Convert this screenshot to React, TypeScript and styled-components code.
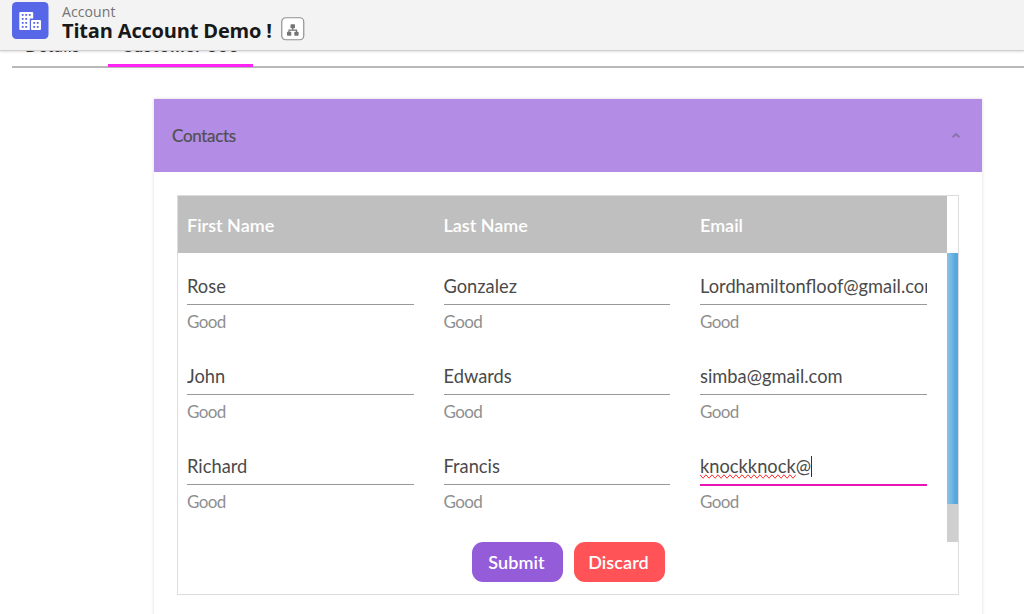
import React from "react";
import styled, { createGlobalStyle } from "styled-components";

const GlobalStyle = createGlobalStyle`
  * { box-sizing: border-box; }
  body { margin: 0; background: #fff; overflow: hidden; font-family: Lato, sans-serif; }
`;

const Page = styled.div`
  display: flex;
  flex-direction: column;
  height: 614px;
  overflow: hidden;
`;

const Header = styled.header`
  display: flex;
  flex: none;
  height: 51px;
  padding: 2px 0 0 12px;
  background: #f3f3f3;
  border-bottom: 1px solid #d0d0d0;
  box-shadow: 0 1px 2px rgba(0, 0, 0, 0.12);
  font-family: "Open Sans", sans-serif;
`;

const Logo = styled.svg`
  flex: none;
  width: 37px;
  height: 37px;
`;

const Titles = styled.div`
  display: flex;
  flex-direction: column;
  margin-left: 13px;
`;

const ObjectLabel = styled.span`
  height: 18px;
  font-size: 14px;
  line-height: 19px;
  letter-spacing: 0.1px;
  color: #747474;
`;

const TitleRow = styled.div`
  display: flex;
  align-items: center;
  height: 22px;
`;

const Title = styled.h1`
  width: 218.5px;
  margin: 0;
  font-size: 20px;
  line-height: 22px;
  font-weight: 700;
  white-space: nowrap;
  letter-spacing: -0.17px;
  color: #181818;
`;

const Hierarchy = styled.svg`
  flex: none;
  width: 24px;
  height: 24px;
  margin-top: -4px;
`;

const Tabs = styled.nav`
  display: flex;
  flex: none;
  height: 17px;
  margin-left: 12px;
  overflow: hidden;
  background: linear-gradient(#b8b8b8, #b8b8b8) 0 15px / 100% 2px no-repeat;
`;

const Tab = styled.div<{ $width: number; $gap?: number; $active?: boolean }>`
  flex: none;
  width: ${(p) => p.$width}px;
  height: 16px;
  margin-right: ${(p) => p.$gap ?? 0}px;
  text-align: center;
  font-size: 17px;
  font-weight: ${(p) => (p.$active ? 700 : 400)};
  line-height: 22px;
  letter-spacing: ${(p) => (p.$active ? 0.9 : 0.5)}px;
  color: #333;
  border-bottom: ${(p) => (p.$active ? "3px solid #ff24f2" : "none")};
`;

const TabText = styled.span`
  display: block;
  margin-top: -16px;
`;

const Card = styled.section`
  display: flex;
  flex: none;
  flex-direction: column;
  width: 828px;
  height: 560px;
  margin: 31px 0 0 154px;
  box-shadow: 0 0 3px rgba(0, 0, 0, 0.17);
`;

const CardHeader = styled.div`
  display: flex;
  align-items: center;
  justify-content: space-between;
  height: 73px;
  padding: 0 21px 0 18px;
  background: #b38ce6;
  color: #505050;
  font-size: 17px;
  letter-spacing: -0.3px;
`;

const CardTitle = styled.span`
  margin-top: -1px;
  -webkit-text-stroke: 0.2px #505050;
`;

const Grid = styled.div`
  width: 782px;
  height: 400px;
  margin: 23px 0 0 23px;
  border: 1px solid #dcdcdc;
`;

const Columns = styled.div`
  display: grid;
  grid-template-columns: repeat(3, 256.5px);
  width: 769px;
`;

const HeadRow = styled(Columns)`
  height: 57px;
  align-items: center;
  background: #bfbfbf;
`;

const HeadCell = styled.div`
  padding: 0 0 0 9px;
  font-size: 18px;
  font-weight: 600;
  color: #fff;
`;

const Body = styled.div`
  display: flex;
  height: 289px;
`;

const Rows = styled.div`
  width: 769px;
`;

const Row = styled(Columns)`
  height: 90.2px;
`;

const Field = styled.div`
  display: flex;
  flex-direction: column;
  padding: 15px 21px 0 9px;
  min-width: 0;
`;

const Value = styled.div<{ $focus?: boolean }>`
  height: ${(p) => (p.$focus ? 38 : 37)}px;
  margin-bottom: ${(p) => (p.$focus ? -1 : 0)}px;
  overflow: hidden;
  white-space: nowrap;
  font-size: 18.3px;
  line-height: 36px;
  color: #4a4a4a;
  border-bottom: ${(p) => (p.$focus ? "2px solid #e815b5" : "1px solid #999")};
`;

const Misspelled = styled.span`
  text-decoration-line: spelling-error;
`;

const Caret = styled.span`
  display: inline-block;
  width: 1px;
  height: 21px;
  vertical-align: -4px;
  background: #333;
`;

const Hint = styled.div`
  height: 20px;
  margin-top: 7px;
  font-size: 17px;
  line-height: 20px;
  letter-spacing: -0.6px;
  color: #8f8f8f;
`;

const ScrollTrack = styled.div`
  width: 11px;
  height: 289px;
  background: #cfcfcf;
`;

const ScrollThumb = styled.div`
  height: 251px;
  background: linear-gradient(90deg, #8cc3e6 0%, #70b5e2 45%, #55a8e0 75%, #55a8e0 100%);
`;

const Actions = styled.div`
  display: flex;
  justify-content: center;
  gap: 11px;
`;

const Button = styled.button<{ $color: string }>`
  width: 91px;
  height: 40px;
  padding: 0 1px 0 0;
  border: 0;
  border-radius: 11px;
  background: ${(p) => p.$color};
  color: #fff;
  font-family: Lato, sans-serif;
  font-size: 18px;
  font-weight: 600;
  letter-spacing: 0.1px;
`;

const contacts = [
  ["Rose", "Gonzalez", "Lordhamiltonfloof@gmail.com"],
  ["John", "Edwards", "simba@gmail.com"],
  ["Richard", "Francis", "knockknock@"],
];

const buildingWindows = [
  [10, 13], [13.5, 13], [17, 13], [10, 17], [13.5, 17], [10, 21], [13.5, 21], [10, 25], [13.5, 25],
  [21.5, 21], [25, 21], [21.5, 25], [25, 25],
];

export default function App() {
  return (
    <Page>
      <GlobalStyle />
      <Header>
        <Logo viewBox="0 0 37 37">
          <rect width="36.5" height="37" rx="4.5" fill="#5867e8" />
          <path d="M8.3 10h11.9a1 1 0 0 1 1 1v5.5h-3.4V28H8.3a1 1 0 0 1-1-1V11a1 1 0 0 1 1-1z" fill="#fff" />
          <rect x="19" y="18" width="10" height="10" rx="1" fill="#fff" />
          {buildingWindows.map(([x, y]) => (
            <rect key={`${x}-${y}`} x={x - 0.2} y={y - 1} width="1.8" height="1.8" fill="#5867e8" />
          ))}
        </Logo>
        <Titles>
          <ObjectLabel>Account</ObjectLabel>
          <TitleRow>
            <Title>Titan Account Demo !</Title>
            <Hierarchy viewBox="0 0 24 24">
              <rect x="0.75" y="0.75" width="22" height="22" rx="4" fill="#fff" stroke="#919191" strokeWidth="1.2" />
              <g fill="#747474">
                <rect x="9.5" y="7.3" width="4.5" height="4" rx="0.7" />
                <rect x="6" y="14.7" width="4.3" height="4" rx="0.7" />
                <rect x="13.3" y="14.7" width="4.3" height="4" rx="0.7" />
              </g>
              <path d="M11.75 11v2.2M8 15v-1.8h7.5v1.8" fill="none" stroke="#747474" strokeWidth="1.2" />
            </Hierarchy>
          </TitleRow>
        </Titles>
      </Header>
      <Tabs>
        <Tab $width={81} $gap={15}><TabText>Details</TabText></Tab>
        <Tab $width={145} $active><TabText>Customer 360</TabText></Tab>
      </Tabs>
      <Card>
        <CardHeader>
          <CardTitle>Contacts</CardTitle>
          <svg width="10" height="7" viewBox="0 0 10 7">
            <path d="M1.5 5.3 5 2l3.5 3.3" fill="none" stroke="#8b74ae" strokeWidth="2" />
          </svg>
        </CardHeader>
        <Grid>
          <HeadRow>
            <HeadCell>First Name</HeadCell>
            <HeadCell>Last Name</HeadCell>
            <HeadCell>Email</HeadCell>
          </HeadRow>
          <Body>
            <Rows>
              {contacts.map((contact) => (
                <Row key={contact[0]}>
                  {contact.map((value) => (
                    <Field key={value}>
                      {value === "knockknock@" ? (
                        <Value $focus>
                          <Misspelled>knockknock</Misspelled>@<Caret />
                        </Value>
                      ) : (
                        <Value>{value}</Value>
                      )}
                      <Hint>Good</Hint>
                    </Field>
                  ))}
                </Row>
              ))}
            </Rows>
            <ScrollTrack>
              <ScrollThumb />
            </ScrollTrack>
          </Body>
          <Actions>
            <Button $color="#945cd9">Submit</Button>
            <Button $color="#ff5357">Discard</Button>
          </Actions>
        </Grid>
      </Card>
    </Page>
  );
}
